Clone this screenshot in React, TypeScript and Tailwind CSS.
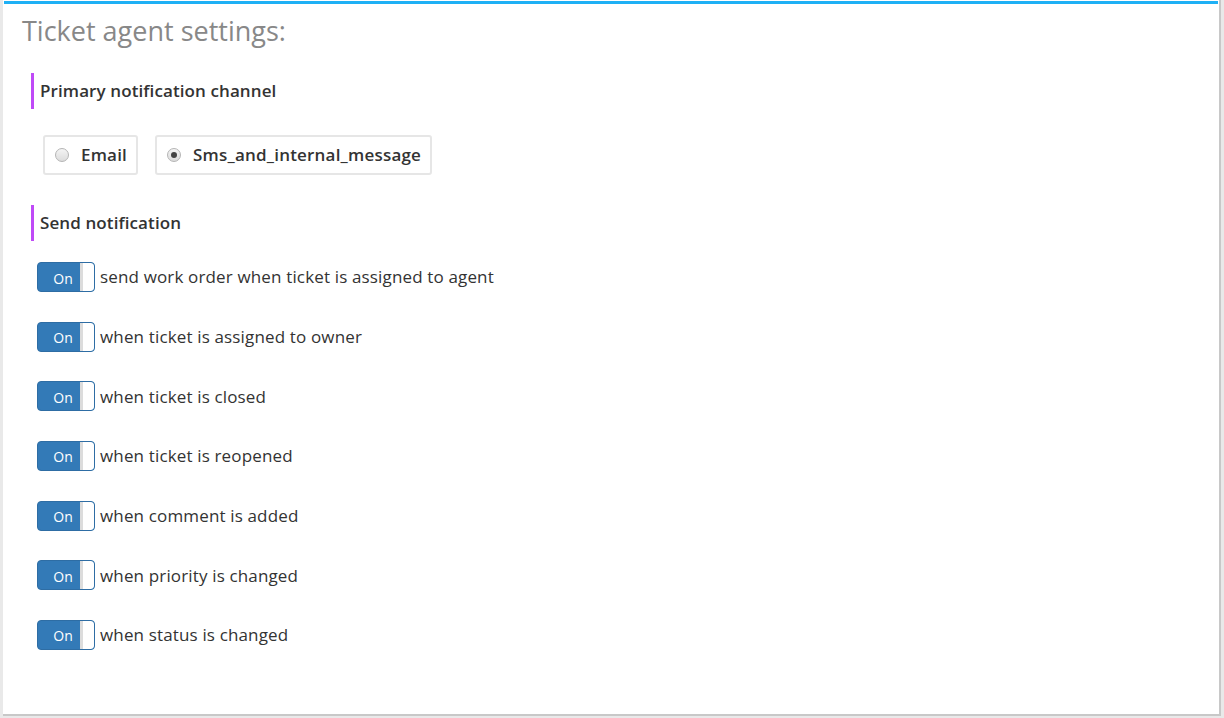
import React from "react";

const items = [
  "send work order when ticket is assigned to agent",
  "when ticket is assigned to owner",
  "when ticket is closed",
  "when ticket is reopened",
  "when comment is added",
  "when priority is changed",
  "when status is changed",
];

function Toggle() {
  return (
    <div className="flex h-[30px] w-[58px] shrink-0 overflow-hidden rounded-[4px] border border-[#2e6da4] bg-[#337ab7]">
      <div className="flex flex-1 items-center justify-center pl-[8px] pt-[2px] text-[14px] text-white">On</div>
      <div className="w-[14px] rounded-r-[3px] border-l-[3px] border-[#dcdcdc] bg-white" />
    </div>
  );
}

function SectionHeader({ children }: { children: React.ReactNode }) {
  return (
    <div className="flex h-[36px] items-center border-l-[3px] border-[#bf4af7] pl-[6px] text-[17px] font-semibold tracking-[0.1px] text-[#333]">
      {children}
    </div>
  );
}

function Radio({ label, checked }: { label: string; checked?: boolean }) {
  return (
    <div className="flex h-[40px] items-center gap-[12px] rounded-[3px] border-2 border-[#e6e6e6] pl-[10px] pr-[9px] text-[17px] font-semibold tracking-[0.2px] text-[#333]">
      <div className="flex h-[14px] w-[14px] items-center justify-center rounded-full border border-[#b5b5b5] bg-gradient-to-b from-[#f4f4f4] to-[#dcdcdc]">
        {checked && <div className="h-[6px] w-[6px] rounded-full bg-[#444]" />}
      </div>
      <span>{label}</span>
    </div>
  );
}

export default function App() {
  return (
    <div
      className="h-[718px] w-[1224px] bg-[#e9e9e9] pb-[2px] pl-[3px] pr-[3px] pt-0"
      style={{ fontFamily: '"Open Sans", "Noto Sans", sans-serif' }}
    >
      <div className="h-full border-b-[2px] border-r-[2px] border-[#c8c8c8]">
        <div className="h-full bg-white pt-[1px]">
          <div className="mx-[1px] h-[3px] bg-[#1eb0f5]" />
          <div className="pl-[19px] pt-[10px]">
            <div className="text-[27px] leading-[34px] text-[#888]">Ticket agent settings:</div>
            <div className="pl-[9px] pt-[25px]">
              <SectionHeader>Primary notification channel</SectionHeader>
              <div className="flex gap-[17px] pl-[12px] pt-[26px]">
                <Radio label="Email" />
                <Radio label="Sms_and_internal_message" checked />
              </div>
              <div className="pt-[30px]">
                <SectionHeader>Send notification</SectionHeader>
              </div>
              <div className="flex flex-col gap-[29.67px] pl-[6px] pt-[21px]">
                {items.map((t) => (
                  <div key={t} className="flex items-center gap-[5px]">
                    <Toggle />
                    <span className="text-[17px] tracking-[0.15px] text-[#333]">{t}</span>
                  </div>
                ))}
              </div>
            </div>
          </div>
        </div>
      </div>
    </div>
  );
}
